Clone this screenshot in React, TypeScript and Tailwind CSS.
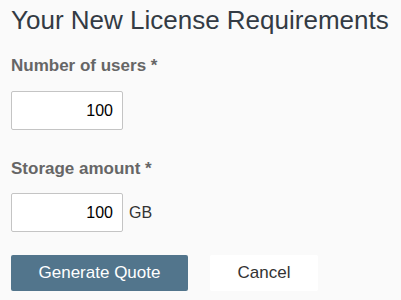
export default function App() {
  return (
    <div className="min-h-screen bg-[#fafafa] px-[11px] pt-[3px] font-['Liberation_Sans',Arial,sans-serif]">
      <h1 className="text-[26px] leading-[34px] text-[#333b44]">Your New License Requirements</h1>

      <div className="mt-[19px] text-[17px] font-bold leading-[20px] text-[#666]">Number of users *</div>
      <div className="mt-[15px] flex items-center">
        <input
          defaultValue="100"
          className="h-[39px] w-[112px] rounded-[2px] border border-[#c4c4c4] bg-white px-[9px] text-right text-[16px] text-black outline-none"
        />
      </div>

      <div className="mt-[29px] text-[17px] font-bold leading-[20px] text-[#666]">Storage amount *</div>
      <div className="mt-[14px] flex items-center gap-[6px]">
        <input
          defaultValue="100"
          className="h-[39px] w-[112px] rounded-[2px] border border-[#c4c4c4] bg-white px-[9px] text-right text-[16px] text-black outline-none"
        />
        <span className="text-[16px] text-[#333]">GB</span>
      </div>

      <div className="mt-[23px] flex gap-[22px]">
        <button className="h-[36px] w-[177px] rounded-[2px] bg-[#52758c] text-[17px] text-white">Generate Quote</button>
        <button className="h-[36px] w-[108px] rounded-[2px] bg-white text-[17px] text-[#333]">Cancel</button>
      </div>
    </div>
  );
}
